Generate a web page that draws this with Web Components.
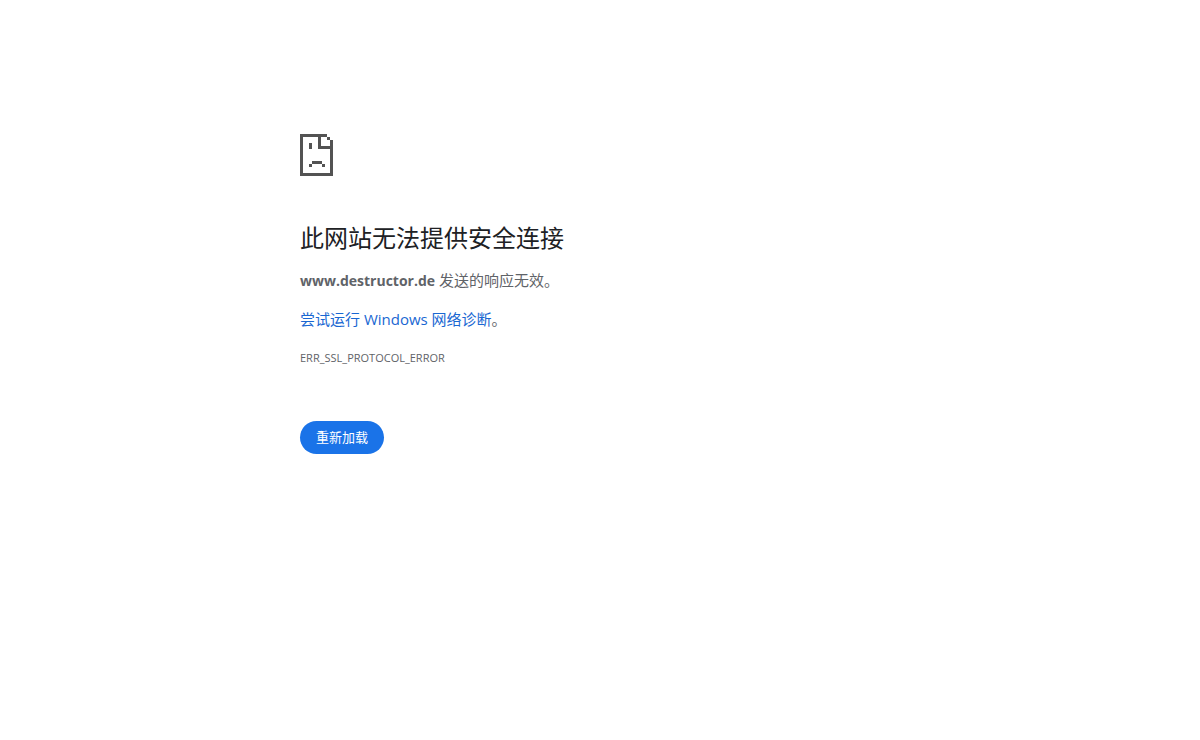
<!DOCTYPE html>
<html lang="zh-CN">
<head>
<meta charset="utf-8">
<meta name="viewport" content="width=device-width, initial-scale=1">
<title>www.destructor.de</title>
<style>
body { margin: 0; background: #fff; color: #5f6368; font-family: "Open Sans", "Noto Sans CJK SC", sans-serif; font-size: 15px; line-height: 24px; }
</style>
</head>
<body>
<error-page>
  <sad-page-icon slot="icon"></sad-page-icon>
  <span slot="title">此网站无法提供安全连接</span>
  <error-summary slot="summary" host="www.destructor.de">发送的响应无效。</error-summary>
  <diagnose-link slot="suggestion">尝试运行 Windows 网络诊断</diagnose-link>
  <span slot="code">ERR_SSL_PROTOCOL_ERROR</span>
  <reload-button slot="action">重新加载</reload-button>
</error-page>
<script>
class BaseElement extends HTMLElement {
  constructor() {
    super();
    this.attachShadow({ mode: "open" }).innerHTML = this.constructor.markup;
  }
}

customElements.define("sad-page-icon", class extends BaseElement {
  static markup = `
    <style>
      :host { display: block; }
      svg { display: block; width: 33px; height: 42px; fill: #535353; }
    </style>
    <svg viewBox="0 0 33 42" shape-rendering="crispEdges" aria-hidden="true">
      <path d="M0 0H27V3H30V6H33V42H0ZM3 3V39H30V15H18V3ZM21 3V12H30V6H27V3Z" fill-rule="evenodd"/>
      <path d="M9 9h3v6H9zM12 27h10v3H12zM9 30h3v3H9zM22 30h3v3h-3z"/>
    </svg>`;
});

customElements.define("error-summary", class extends BaseElement {
  static markup = `
    <style>:host { display: block; } strong { font-size: 14px; font-weight: 700; line-height: 20px; }</style>
    <strong></strong> <slot></slot>`;
  connectedCallback() {
    this.shadowRoot.querySelector("strong").textContent = this.getAttribute("host");
  }
});

customElements.define("diagnose-link", class extends BaseElement {
  static markup = `
    <style>:host { display: block; } a { color: #1967d2; text-decoration: none; }</style>
    <a href="#diagnose"><slot></slot></a>。`;
});

customElements.define("reload-button", class extends BaseElement {
  static markup = `
    <style>
      :host { display: block; }
      button {
        display: block; margin: 0; padding: 8px 16px; border: 0; border-radius: 20px;
        background: #1a73e8; color: #fff; font: inherit; font-size: 13px; line-height: 17px; cursor: pointer;
      }
    </style>
    <button type="button"><slot></slot></button>`;
  connectedCallback() {
    this.shadowRoot.querySelector("button").addEventListener("click", () => location.reload());
  }
});

customElements.define("error-page", class extends BaseElement {
  static markup = `
    <style>
      :host { display: block; }
      main { box-sizing: border-box; max-width: 600px; margin: 0 auto; padding-top: 134px; }
      h1 { margin: 48px 0 16px; color: #202124; font-size: 24px; font-weight: 400; line-height: 28px; }
      .text { margin: 0 0 15px; }
      .code { font-size: 11px; }
      .actions { display: flex; margin-top: 51px; }
    </style>
    <main>
      <slot name="icon"></slot>
      <h1><slot name="title"></slot></h1>
      <div class="text"><slot name="summary"></slot></div>
      <div class="text"><slot name="suggestion"></slot></div>
      <div class="code"><slot name="code"></slot></div>
      <div class="actions"><slot name="action"></slot></div>
    </main>`;
});
</script>
</body>
</html>
